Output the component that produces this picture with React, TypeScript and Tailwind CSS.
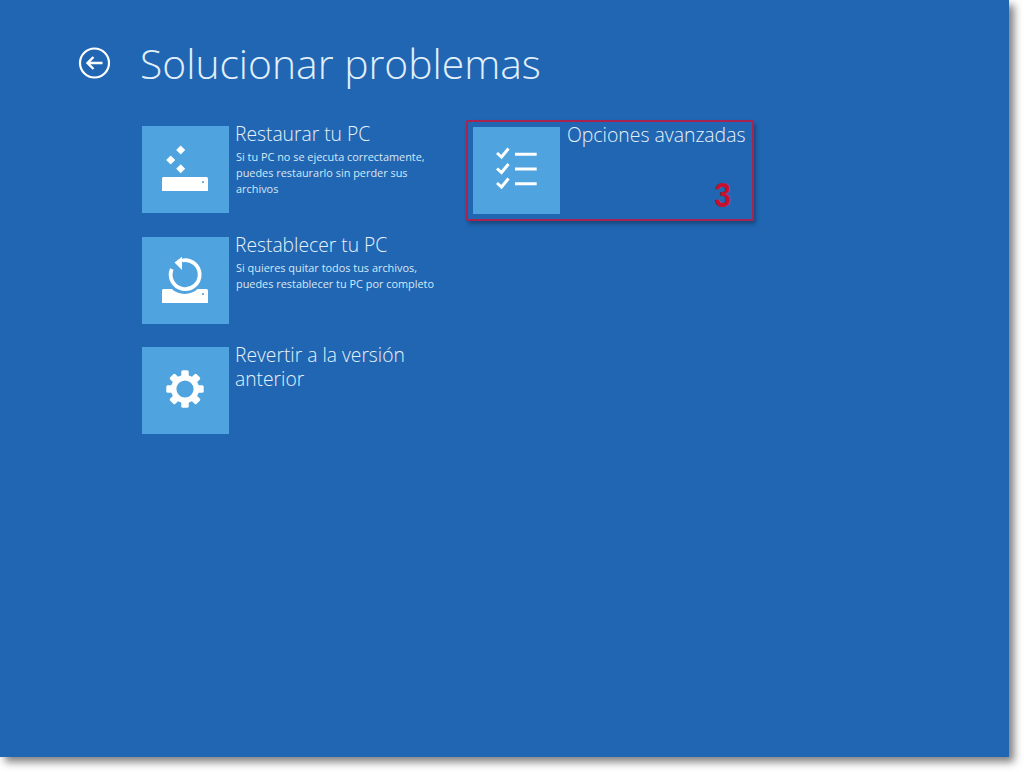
const LIGHT = "font-['Open_Sans',sans-serif] font-light";

function Tile({ children }: { children: React.ReactNode }) {
  return (
    <div className="w-[87px] h-[87px] shrink-0 bg-[#4fa3de] flex items-center justify-center">
      <svg width="87" height="87" viewBox="0 0 87 87" fill="white" stroke="none">
        {children}
      </svg>
    </div>
  );
}

function Row({
  title,
  desc,
  children,
}: {
  title: React.ReactNode;
  desc?: React.ReactNode;
  children: React.ReactNode;
}) {
  return (
    <div className="flex h-[87px] w-[324px]">
      <Tile>{children}</Tile>
      <div className="ml-[6px] -mt-[4px] min-w-0">
        <div className={`${LIGHT} text-[19.250px] leading-[24px] text-[#e6f2fa] whitespace-nowrap`}>{title}</div>
        {desc && (
          <div className="font-['Open_Sans',sans-serif] text-[10.900px] leading-[16px] mt-[3px] ml-[1px] text-[#d6e8f6] whitespace-nowrap">
            {desc}
          </div>
        )}
      </div>
    </div>
  );
}

export default function App() {
  return (
    <div className="w-[1024px] h-[772px] bg-white overflow-hidden">
      <div className="w-[1009px] h-[757px] bg-[#2066b3] shadow-[5px_5px_8px_rgba(0,0,0,0.5)] pt-[37px]">
        <header className="flex items-center h-[54px] pl-[78px]">
          <svg className="mb-[2px]" width="33" height="32" viewBox="0 0 33 32" fill="none" stroke="white" strokeWidth="2.200">
            <circle cx="16.500" cy="16" r="14.500" />
            <path d="M24.500 16 H9.500 M15.500 10 L9.500 16 L15.500 22" strokeWidth="2.400" />
          </svg>
          <h1 className={`${LIGHT} ml-[29px] mb-[2px] text-[40.800px] leading-[54px] text-[#e0eff9] whitespace-nowrap`}>
            Solucionar problemas
          </h1>
        </header>

        <main className="flex items-start mt-[35px] pl-[142px]">
          <div className="flex flex-col gap-[23.500px]">
            <Row
              title="Restaurar tu PC"
              desc={
                <>
                  Si tu PC no se ejecuta correctamente,
                  <br />
                  puedes restaurarlo sin perder sus
                  <br />
                  archivos
                </>
              }
            >
              <path d="M38.700 19.500 L43.200 24 L38.700 28.500 L34.200 24Z" />
              <path d="M28.700 29.500 L33.200 34 L28.700 38.500 L24.200 34Z" />
              <path d="M38.700 38.200 L43.200 42.700 L38.700 47.200 L34.200 42.700Z" />
              <path
                fillRule="evenodd"
                d="M21.500 51 H64.500 A1.500 1.500 0 0 1 66 52.500 V65 H20 V52.500 A1.500 1.500 0 0 1 21.500 51Z M61 55 a1 1 0 1 0 .01 0z"
              />
            </Row>
            <Row
              title="Restablecer tu PC"
              desc={
                <>
                  Si quieres quitar todos tus archivos,
                  <br />
                  puedes restablecer tu PC por completo
                </>
              }
            >
              <path
                fillRule="evenodd"
                d="M21.500 52 H64.500 A1.500 1.500 0 0 1 66 53.500 V66 H20 V53.500 A1.500 1.500 0 0 1 21.500 52Z M61 56 a1 1 0 1 0 .01 0z"
              />
              <circle cx="42.700" cy="38" r="19" fill="#4fa3de" />
              <path d="M40 23.500 A14.500 14.500 0 1 1 29.800 32" fill="none" stroke="white" strokeWidth="3.800" />
              <path d="M40 19.700 V33 L32.500 25.500Z" />
            </Row>
            <Row
              title={
                <>
                  Revertir a la versión
                  <br />
                  anterior
                </>
              }
            >
              <g transform="translate(43 42)">
                <circle r="11.300" fill="none" stroke="white" strokeWidth="5.400" />
                {[0, 45, 90, 135, 180, 225, 270, 315].map((a) => (
                  <rect key={a} x="-3.700" y="-18.700" width="7.400" height="7" rx="1.500" transform={`rotate(${a})`} />
                ))}
              </g>
            </Row>
          </div>

          <div className="relative -mt-[6px] w-[288px] h-[101px] border-2 border-[#a8234f] rounded-[2px] shadow-[2px_3px_4px_rgba(0,0,0,0.3)] pl-[5px] pt-[5px]">
            <div className="flex">
              <Tile>
                <g fill="none" stroke="white">
                  <path d="M24 26 L28.500 30 L35.500 21.500" strokeWidth="3" />
                  <path d="M24 41.500 L28.500 45.500 L35.500 37" strokeWidth="3" />
                  <path d="M24 56 L28.500 60 L35.500 51.500" strokeWidth="3" />
                  <path d="M42 27.300 H63.700 M42 42 H63.700 M42 56.700 H63.700" strokeWidth="3" />
                </g>
              </Tile>
              <div className={`${LIGHT} ml-[7px] -mt-[4px] text-[19.400px] leading-[24px] text-[#e6f2fa] whitespace-nowrap`}>
                Opciones avanzadas
              </div>
            </div>
            <span className="absolute left-[245px] top-[56px] scale-x-[0.85] font-['Liberation_Sans',sans-serif] font-bold text-[35px] leading-[34px] text-[#c8102e]">
              3
            </span>
          </div>
        </main>
      </div>
    </div>
  );
}
